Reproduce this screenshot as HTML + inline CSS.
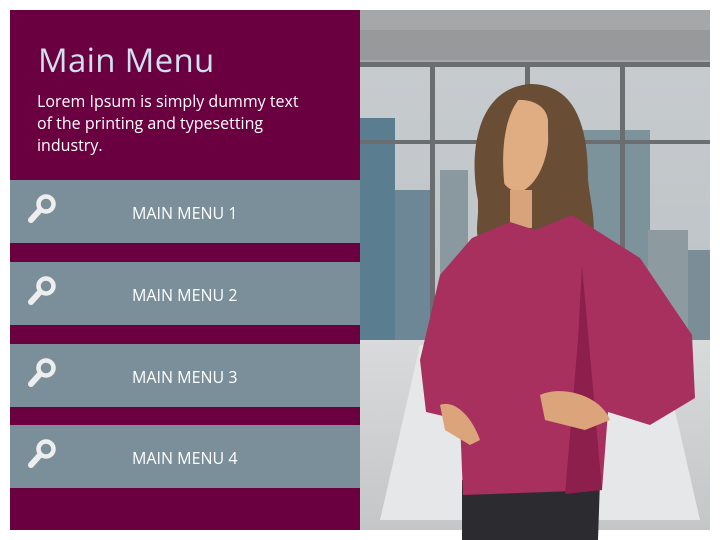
<!DOCTYPE html>
<html><head><meta charset="utf-8"><style>
*{margin:0;padding:0;box-sizing:border-box}
body{width:720px;height:540px;background:#fff;position:relative;overflow:hidden;font-family:"Open Sans","Liberation Sans",sans-serif}
#panel{position:absolute;left:10px;top:10px;width:350px;height:520px;background:#6a0040}
h1{position:absolute;left:28px;top:27px;font-size:33px;font-weight:normal;color:#cfe0ef;letter-spacing:0.3px}
p{position:absolute;left:27px;top:80px;width:272px;font-size:16px;line-height:22px;color:#fff}
.btn{position:absolute;left:0;width:350px;height:63px;background:#7a8f99;color:#fff;font-size:16px}
.btn span{position:absolute;left:122px;top:22px}
.btn svg{position:absolute;left:16px;top:12px}
</style></head><body>
<div id="panel">
<h1>Main Menu</h1>
<p>Lorem Ipsum is simply dummy text of the printing and typesetting industry.</p>
<div class="btn" style="top:170px"><svg width="34" height="34" viewBox="0 0 34 34"><circle cx="20" cy="12" r="7.5" fill="none" stroke="#eee" stroke-width="4.5"/><path d="M14 18 L5 28" stroke="#eee" stroke-width="6" stroke-linecap="round"/></svg><span>MAIN MENU 1</span></div>
<div class="btn" style="top:252px"><svg width="34" height="34" viewBox="0 0 34 34"><circle cx="20" cy="12" r="7.5" fill="none" stroke="#eee" stroke-width="4.5"/><path d="M14 18 L5 28" stroke="#eee" stroke-width="6" stroke-linecap="round"/></svg><span>MAIN MENU 2</span></div>
<div class="btn" style="top:334px"><svg width="34" height="34" viewBox="0 0 34 34"><circle cx="20" cy="12" r="7.5" fill="none" stroke="#eee" stroke-width="4.5"/><path d="M14 18 L5 28" stroke="#eee" stroke-width="6" stroke-linecap="round"/></svg><span>MAIN MENU 3</span></div>
<div class="btn" style="top:415px"><svg width="34" height="34" viewBox="0 0 34 34"><circle cx="20" cy="12" r="7.5" fill="none" stroke="#eee" stroke-width="4.5"/><path d="M14 18 L5 28" stroke="#eee" stroke-width="6" stroke-linecap="round"/></svg><span>MAIN MENU 4</span></div>
</div>
<svg style="position:absolute;left:360px;top:0" width="360" height="540" viewBox="360 0 360 540">
<defs>
<linearGradient id="sky" x1="0" y1="0" x2="0" y2="1"><stop offset="0" stop-color="#c9cdd0"/><stop offset="1" stop-color="#b5bcc0"/></linearGradient>
<linearGradient id="floor" x1="0" y1="0" x2="0" y2="1"><stop offset="0" stop-color="#d8dadb"/><stop offset="1" stop-color="#c4c6c7"/></linearGradient>
</defs>
<rect x="360" y="10" width="350" height="520" fill="url(#sky)"/>
<rect x="360" y="10" width="350" height="55" fill="#a5a7a9"/>
<rect x="360" y="30" width="350" height="30" fill="#97999b"/>
<rect x="360" y="118" width="35" height="230" fill="#5b7d90"/>
<rect x="395" y="190" width="40" height="160" fill="#6e8796"/>
<rect x="440" y="170" width="28" height="180" fill="#8a989f"/>
<rect x="580" y="130" width="70" height="220" fill="#7d939c"/>
<rect x="648" y="230" width="40" height="120" fill="#8d9aa0"/>
<rect x="688" y="250" width="22" height="100" fill="#7b8d96"/>
<g fill="#6b6e70"><rect x="360" y="62" width="350" height="5"/><rect x="430" y="62" width="5" height="290"/><rect x="525" y="62" width="5" height="290"/><rect x="620" y="62" width="5" height="290"/><rect x="360" y="140" width="350" height="4"/></g>
<rect x="360" y="340" width="350" height="190" fill="url(#floor)"/>
<path d="M380 520 L420 345 L660 345 L700 520 Z" fill="#e6e7e8"/>
<path d="M478 200 C468 150 478 88 530 84 C582 84 588 140 588 180 C592 215 602 240 580 252 L488 252 C470 240 480 220 478 200 Z" fill="#6a4d35"/>
<path d="M496 110 C502 96 545 94 548 120 C552 150 540 185 520 192 C500 192 490 160 492 130 Z" fill="#e0ad83"/>
<path d="M478 140 C484 110 500 100 520 98 C505 115 500 150 505 190 C500 220 490 240 478 250 Z" fill="#6a4d35"/>
<path d="M548 120 C560 150 565 200 580 240 L560 240 C550 200 548 160 548 120 Z" fill="#6a4d35"/>
<rect x="510" y="190" width="22" height="38" fill="#d8a37a"/>
<path d="M462 480 L600 480 L598 540 L462 540 Z" fill="#2c2c30"/>
<path d="M472 238 L510 222 L535 230 L572 215 L640 258 L692 335 L695 398 L650 425 L608 412 L602 490 L463 495 L460 420 L426 412 L420 360 L440 275 Z" fill="#a8305f"/>
<path d="M582 265 L602 490 L565 494 L578 340 Z" fill="#8c1f4b"/>
<path d="M440 405 C452 400 470 412 480 440 L470 445 L445 430 Z" fill="#dba47a"/>
<path d="M540 395 C562 385 600 395 610 420 L585 430 L545 420 Z" fill="#dba47a"/>
</svg>
</body></html>
